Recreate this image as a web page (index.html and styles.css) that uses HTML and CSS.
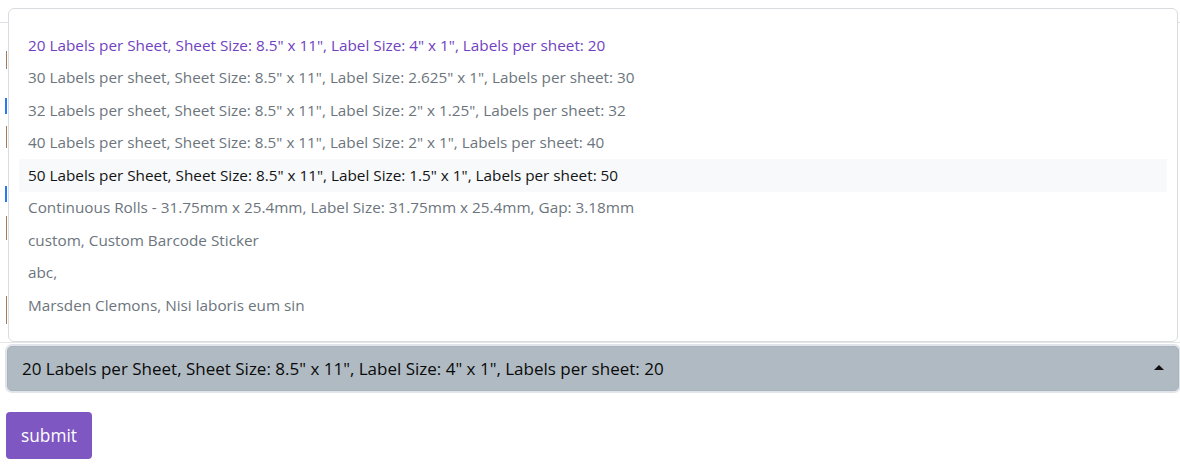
FILE: index.html
```html
<!DOCTYPE html>
<html lang="en">
<head>
<meta charset="utf-8">
<title>Label sheet</title>
<link rel="stylesheet" href="styles.css">
</head>
<body>
<form class="form">
  <div class="field">
    <div class="backdrop">
      <div class="edge">
        <span class="mark mark-brown m1"></span>
        <span class="mark mark-blue m2"></span>
        <span class="mark mark-brown m3"></span>
        <span class="mark mark-blue m4"></span>
        <span class="mark mark-brown m5"></span>
        <span class="mark mark-brown m6"></span>
      </div>
    </div>
    <ul class="menu">
      <li class="item item-selected">20 Labels per Sheet, Sheet Size: 8.5" x 11", Label Size: 4" x 1", Labels per sheet: 20</li>
      <li class="item">30 Labels per sheet, Sheet Size: 8.5" x 11", Label Size: 2.625" x 1", Labels per sheet: 30</li>
      <li class="item">32 Labels per sheet, Sheet Size: 8.5" x 11", Label Size: 2" x 1.25", Labels per sheet: 32</li>
      <li class="item">40 Labels per sheet, Sheet Size: 8.5" x 11", Label Size: 2" x 1", Labels per sheet: 40</li>
      <li class="item item-hover">50 Labels per Sheet, Sheet Size: 8.5" x 11", Label Size: 1.5" x 1", Labels per sheet: 50</li>
      <li class="item">Continuous Rolls - 31.75mm x 25.4mm, Label Size: 31.75mm x 25.4mm, Gap: 3.18mm</li>
      <li class="item">custom, Custom Barcode Sticker</li>
      <li class="item">abc,</li>
      <li class="item">Marsden Clemons, Nisi laboris eum sin</li>
    </ul>
    <div class="select">
      <span class="select-value">20 Labels per Sheet, Sheet Size: 8.5" x 11", Label Size: 4" x 1", Labels per sheet: 20</span>
      <span class="caret"></span>
    </div>
  </div>
  <button type="button" class="btn">submit</button>
</form>
</body>
</html>
```

FILE: styles.css
```css
html, body {
  margin: 0;
  padding: 0;
  background: #fff;
}
body {
  font-family: "Segoe UI", "Open Sans", "Noto Sans", sans-serif;
  color: #212529;
}
.form {
  padding: 0 2px 0 8px;
  display: flex;
  flex-direction: column;
  align-items: flex-start;
}
.field {
  position: relative;
  width: 100%;
}
.backdrop {
  border-top: 1px solid #dee2e6;
  margin-top: 22px;
  margin-left: -8px;
  margin-right: -2px;
  box-sizing: border-box;
  height: 321px;
  border-bottom: 1px solid #e4e6e8;
}
.edge {
  width: 7px;
  display: flex;
  flex-direction: column;
  align-items: flex-end;
}
.mark {
  display: block;
  width: 1px;
}
.mark-brown { background: #a07a5c; }
.mark-blue { background: #2b78ee; width: 2px; }
.m1 { margin-top: 28px; height: 18px; }
.m2 { margin-top: 29px; height: 16px; }
.m3 { margin-top: 12px; height: 22px; }
.m4 { margin-top: 38px; height: 16px; }
.m5 { margin-top: 14px; height: 24px; }
.m6 { margin-top: 56px; height: 28px; }
.menu {
  position: absolute;
  top: 8px;
  left: 0;
  right: 0;
  margin: 0;
  list-style: none;
  background: #fff;
  border: 1px solid #d9dcdf;
  border-radius: 6px;
  padding: 20px 10px 19px;
  box-sizing: border-box;
  height: 334px;
}
.item {
  font-size: 15.3px;
  line-height: 21.5px;
  padding: 5.5px 10px 5.5px 9px;
  color: #6c757d;
  white-space: nowrap;
}
.item-selected {
  color: #6f42c1;
}
.item-hover {
  background: #f8f9fa;
  color: #111315;
}
.select {
  margin-top: 3px;
  margin-left: -1px;
  margin-right: -1px;
  height: 45px;
  border-radius: 5px;
  background: #b0bac3;
  box-shadow: 0 0 0 2px #e1e5ea;
  display: flex;
  align-items: center;
  justify-content: space-between;
  padding: 0 14px 0 14px;
  box-sizing: border-box;
  border: 1px solid #a9b3bd;
}
.select-value {
  font-size: 17px;
  color: #0a0a0a;
  white-space: nowrap;
}
.caret {
  width: 0;
  height: 0;
  border-left: 5px solid transparent;
  border-right: 5px solid transparent;
  border-bottom: 5px solid #111;
  margin-top: -2px;
}
.btn {
  margin-top: 21px;
  margin-left: -2px;
  background: #7e57c2;
  color: #fff;
  border: 0;
  border-radius: 4px;
  font-family: inherit;
  font-size: 17.3px;
  width: 86px;
  height: 47px;
  padding: 0;
}
```
